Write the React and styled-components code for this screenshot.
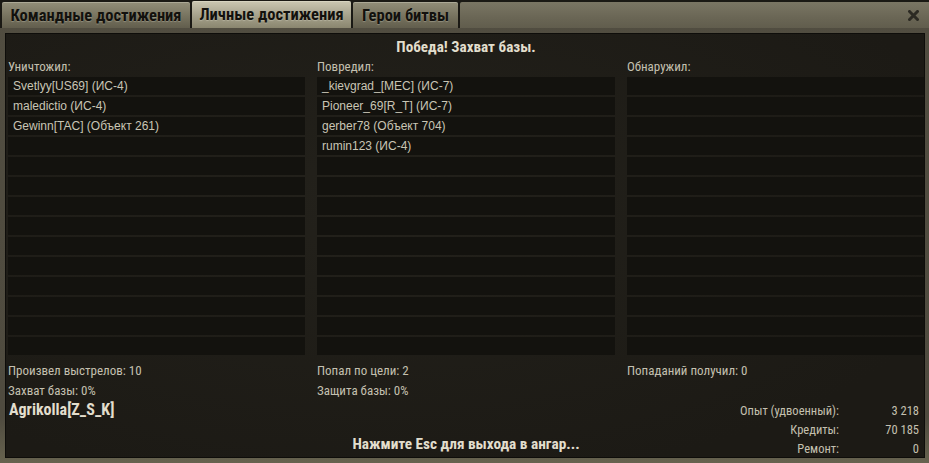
import styled, { createGlobalStyle } from "styled-components";

const GlobalStyle = createGlobalStyle`
  html, body {
    margin: 0;
    padding: 0;
    background: #4f4b3f;
  }
  * {
    box-sizing: border-box;
  }
`;

const condensed = `Roboto, "DejaVu Sans Condensed", sans-serif`;

const Window = styled.div`
  width: 929px;
  height: 463px;
  display: flex;
  flex-direction: column;
  background: linear-gradient(#56524446, #4f4b3f 90%, #67634f);
  background-color: #4f4b3f;
  overflow: hidden;
`;

const TabBar = styled.div`
  flex-shrink: 0;
  height: 28px;
  display: flex;
  align-items: stretch;
  padding: 2px 0 0 2px;
  gap: 2px;
  background: #1a1914;
`;

const Tab = styled.div`
  width: ${(p) => p.$width}px;
  display: flex;
  align-items: center;
  justify-content: center;
  margin-top: ${(p) => (p.$active ? "-1px" : "0")};
  font-family: ${condensed};
  font-stretch: 75%;
  font-weight: bold;
  font-size: 16.5px;
  color: #12110d;
  text-shadow: 0 1px 1px rgba(255, 255, 240, 0.25);
  border-radius: 2px 2px 0 0;
  background: ${(p) =>
    p.$active
      ? "linear-gradient(#cbc7b2, #a5a18b 55%, #8a866f)"
      : "linear-gradient(#928e79, #77735f 55%, #625e4d)"};
  box-shadow: inset 0 1px 0 rgba(255, 255, 240, 0.25);
`;

const Filler = styled.div`
  flex: 1;
  display: flex;
  align-items: center;
  justify-content: flex-end;
  padding-right: 10px;
  background: linear-gradient(#7a7664, #6a6655 60%, #615d4d);
  border-radius: 2px 0 0 0;
`;

const CloseIcon = () => (
  <svg width="11" height="11" viewBox="0 0 11 11">
    <path d="M1.5 1.5 L9.5 9.5 M9.5 1.5 L1.5 9.5" stroke="#2c2a23" strokeWidth="3" strokeLinecap="square" />
  </svg>
);

const Panel = styled.div`
  flex: 1;
  min-height: 0;
  margin: 5px 4px 5px 5px;
  border: 1px solid #0e0d0a;
  background: radial-gradient(ellipse at 40% 40%, #23211b, #1c1a15 80%);
  padding: 3px 0 0 2px;
  display: flex;
  flex-direction: column;
`;

const Title = styled.div`
  height: 20px;
  line-height: 20px;
  text-align: center;
  font-family: ${condensed};
  font-stretch: 75%;
  font-weight: bold;
  font-size: 15.2px;
  color: #e2decd;
`;

const Columns = styled.div`
  display: grid;
  grid-template-columns: 297px 298px 297px;
  column-gap: 12px;
`;

const Column = styled.div`
  display: flex;
  flex-direction: column;
`;

const Label = styled.div`
  height: 20px;
  line-height: 20px;
  font-family: ${condensed};
  font-stretch: 75%;
  font-size: 13px;
  color: #c4c0b0;
`;

const List = styled.div`
  display: flex;
  flex-direction: column;
  gap: 2px;
  margin-bottom: 6px;
`;

const Row = styled.div`
  height: 18px;
  line-height: 18px;
  padding-left: 5px;
  background: #13120e;
  font-family: "Liberation Sans", Arial, sans-serif;
  font-size: 12px;
  color: #c9c5b5;
  white-space: nowrap;
`;

const Stat = styled.div`
  height: 20px;
  line-height: 20px;
  font-family: ${condensed};
  font-stretch: 75%;
  font-size: 13px;
  color: #c4c0b0;
`;

const Bottom = styled.div`
  flex: 1;
  min-height: 0;
  display: grid;
  grid-template-columns: 1fr auto 1fr;
`;

const Player = styled.div`
  height: 18px;
  line-height: 18px;
  font-family: ${condensed};
  font-stretch: 75%;
  font-weight: bold;
  font-size: 16px;
  color: #e2decd;
  padding-left: 1px;
`;

const Hint = styled.div`
  align-self: end;
  height: 24px;
  line-height: 20px;
  font-family: ${condensed};
  font-stretch: 75%;
  font-weight: bold;
  font-size: 15.3px;
  color: #e2decd;
`;

const Summary = styled.div`
  align-self: end;
  justify-self: end;
  display: grid;
  grid-template-columns: auto 80px;
  grid-auto-rows: 19px;
  padding-right: 5px;
  font-family: ${condensed};
  font-stretch: 75%;
  font-size: 12.5px;
  color: #c4c0b0;
  line-height: 19px;
  text-align: right;
`;

const rows = 14;

const columns = [
  {
    label: "Уничтожил:",
    names: ["Svetlyy[US69] (ИС-4)", "maledictio (ИС-4)", "Gewinn[TAC] (Объект 261)"],
    stats: ["Произвел выстрелов: 10", "Захват базы: 0%"],
  },
  {
    label: "Повредил:",
    names: ["_kievgrad_[MEC] (ИС-7)", "Pioneer_69[R_T] (ИС-7)", "gerber78 (Объект 704)", "rumin123 (ИС-4)"],
    stats: ["Попал по цели: 2", "Защита базы: 0%"],
  },
  {
    label: "Обнаружил:",
    names: [],
    stats: ["Попаданий получил: 0"],
  },
];

const summary = [
  ["Опыт (удвоенный):", "3 218"],
  ["Кредиты:", "70 185"],
  ["Ремонт:", "0"],
];

export default function App() {
  return (
    <>
      <GlobalStyle />
      <Window>
        <TabBar>
          <Tab $width={188}>Командные достижения</Tab>
          <Tab $width={159} $active>Личные достижения</Tab>
          <Tab $width={105}>Герои битвы</Tab>
          <Filler>
            <CloseIcon />
          </Filler>
        </TabBar>
        <Panel>
          <Title>Победа! Захват базы.</Title>
          <Columns>
            {columns.map((col) => (
              <Column key={col.label}>
                <Label>{col.label}</Label>
                <List>
                  {Array.from({ length: rows }, (_, i) => (
                    <Row key={i}>{col.names[i] || ""}</Row>
                  ))}
                </List>
                {col.stats.map((s) => (
                  <Stat key={s}>{s}</Stat>
                ))}
              </Column>
            ))}
          </Columns>
          <Bottom>
            <Player>Agrikolla[Z_S_K]</Player>
            <Hint>Нажмите Esc для выхода в ангар...</Hint>
            <Summary>
              {summary.map(([k, v]) => [
                <span key={k}>{k}</span>,
                <span key={v}>{v}</span>,
              ])}
            </Summary>
          </Bottom>
        </Panel>
      </Window>
    </>
  );
}
